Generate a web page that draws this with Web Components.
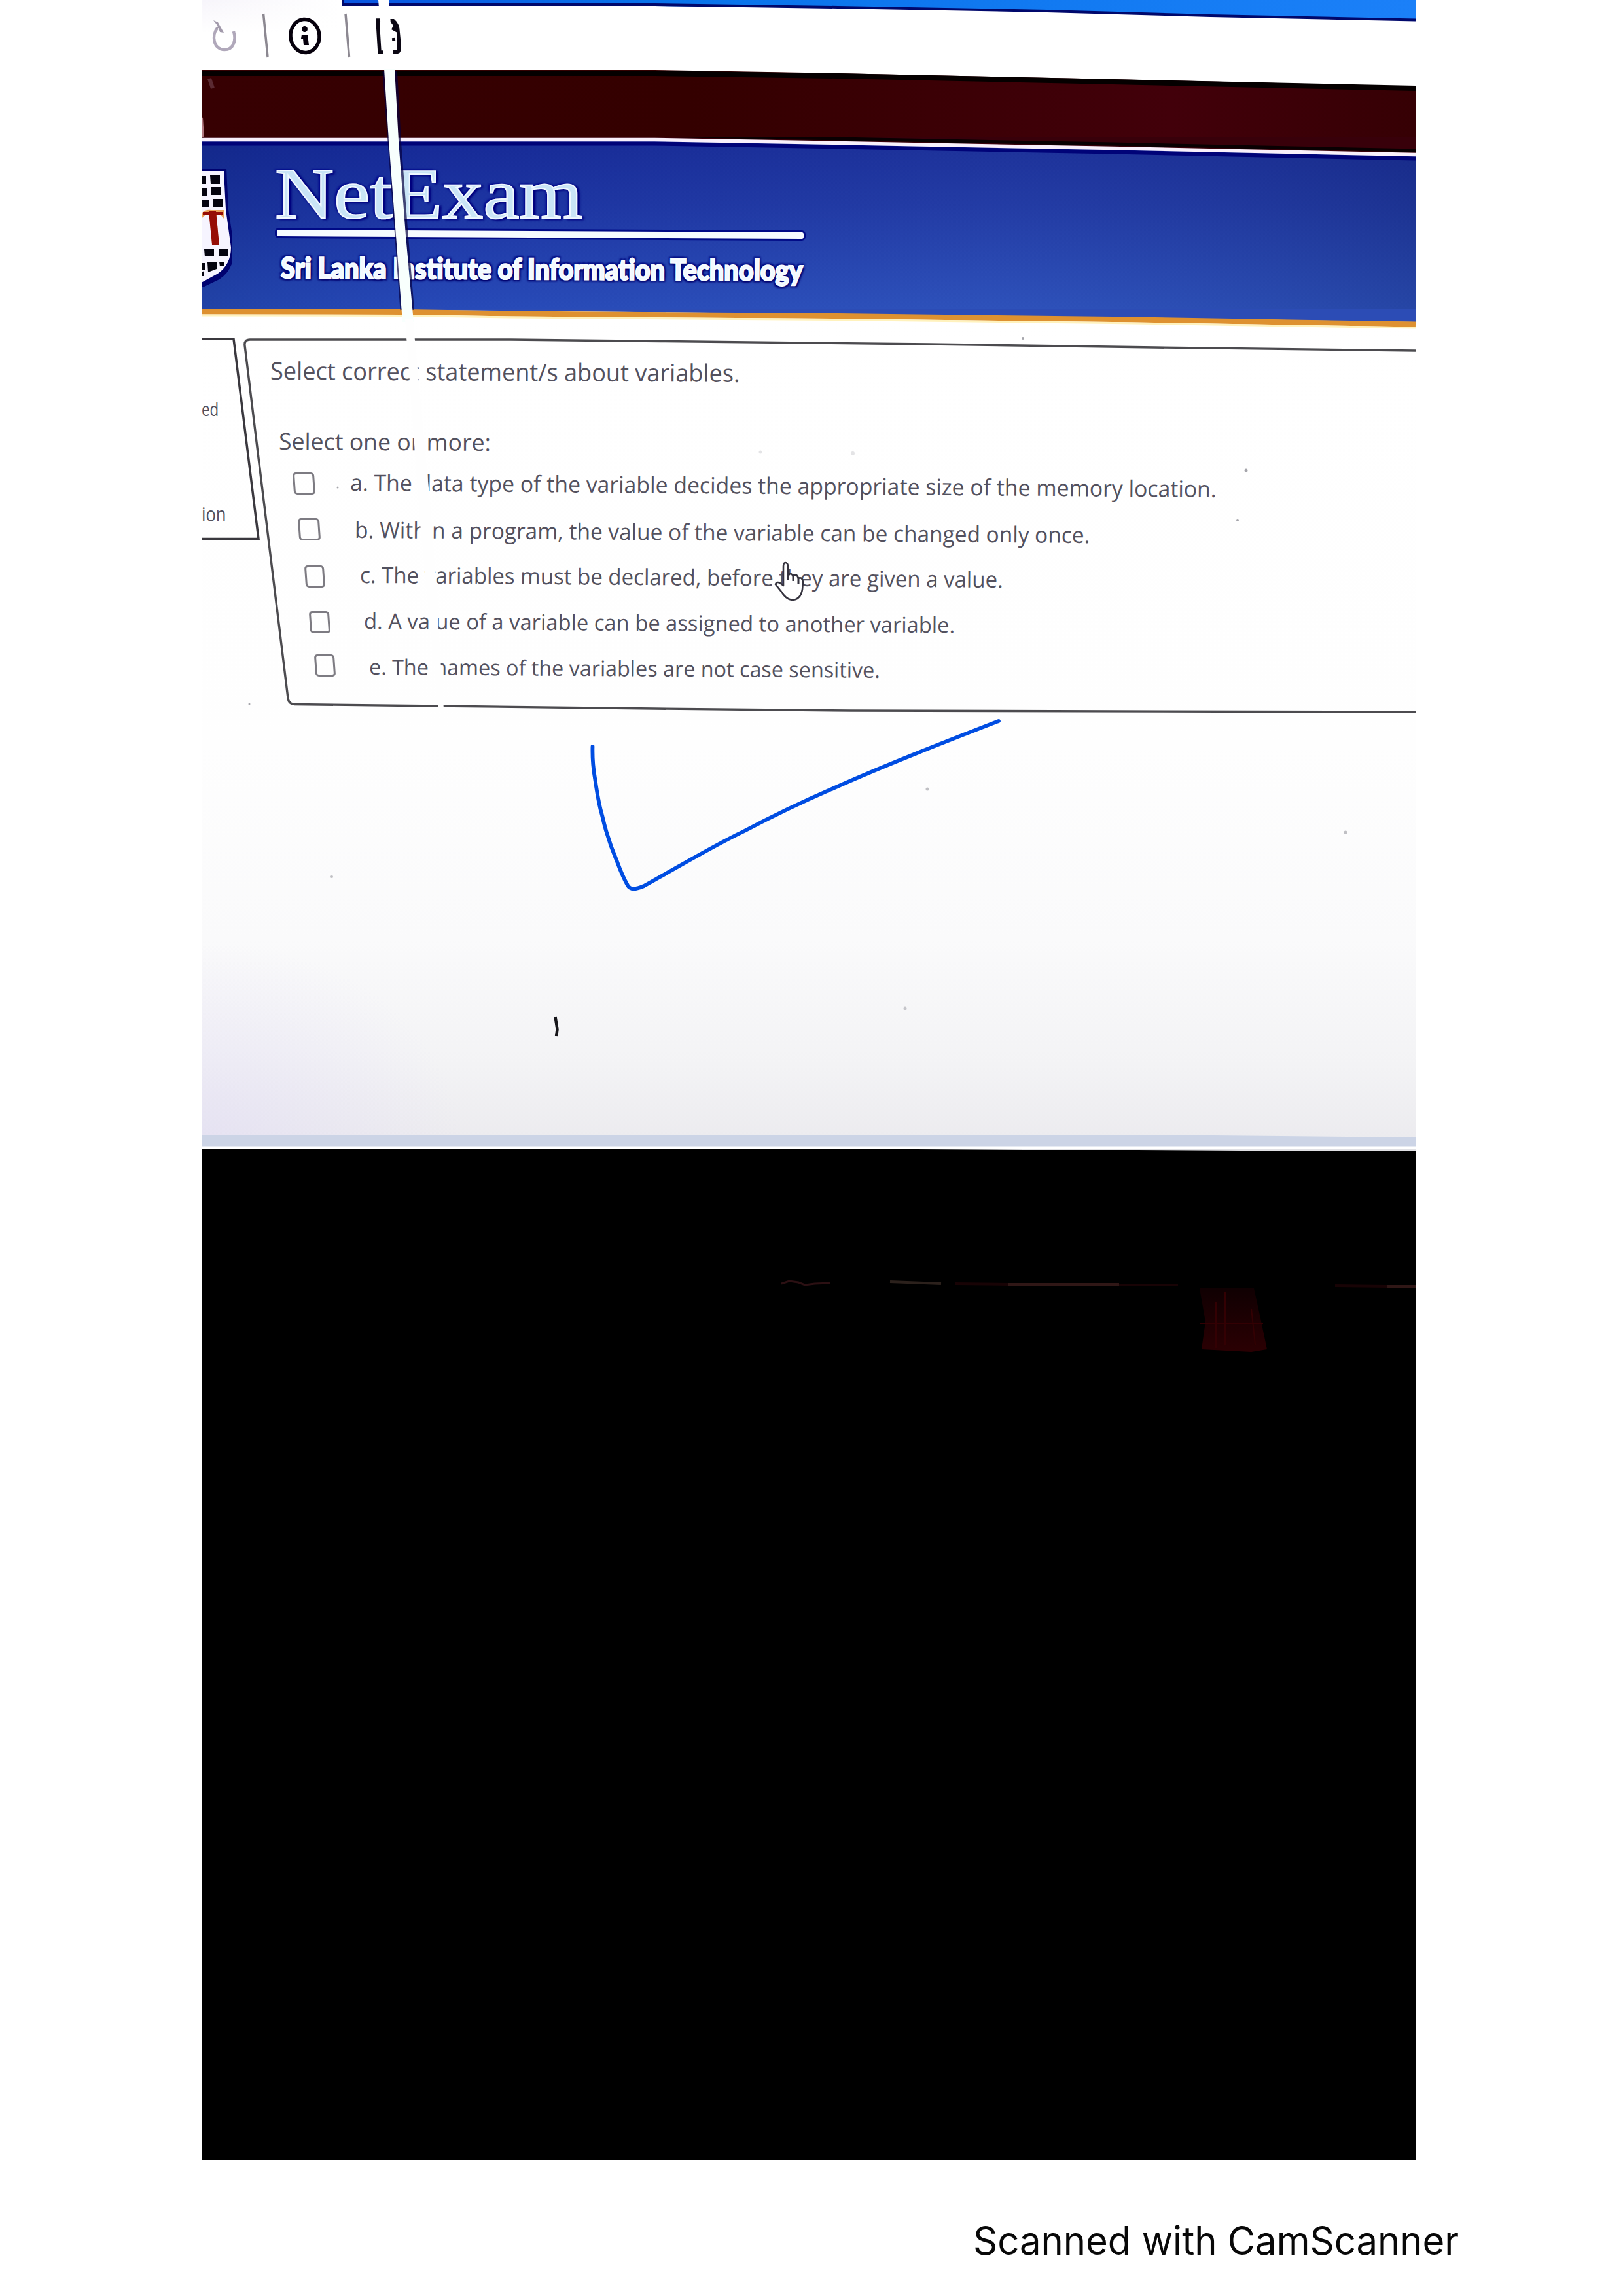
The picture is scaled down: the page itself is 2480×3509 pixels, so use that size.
<!DOCTYPE html>
<html lang="en">
<head>
<meta charset="utf-8">
<title>NetExam</title>
<style>
html,body{margin:0;background:#fff}
body{width:2480px;height:3509px;overflow:hidden;font-family:"Open Sans","Noto Sans",sans-serif}
</style>
</head>
<body>
<scan-page>
  <scan-photo>
    <browser-bar></browser-bar>
    <maroon-band></maroon-band>
    <exam-banner>
      <fit-text slot="title" w="470" size="110" rot="0.05" style="font-family:'Liberation Serif',serif">NetExam</fit-text>
      <fit-text slot="sub" w="798" size="44" rot="0.28" style="font-family:Lato,sans-serif;font-weight:900">Sri Lanka Institute of Information Technology</fit-text>
    </exam-banner>
    <quiz-area>
      <fit-text slot="side" w="26" size="30" style="margin-top:138px;margin-left:0">ed</fit-text>
      <fit-text slot="side" w="38" size="31" style="margin-top:130px;margin-left:0">ion</fit-text>
      <fit-text w="717" size="37" rot="0.3" style="margin:75px 0 0 33px">Select correct statement/s about variables.</fit-text>
      <fit-text w="324" size="35" rot="0.35" style="margin:72px 0 27px 46px">Select one or more:</fit-text>
      <answer-option style="height:73px;padding-left:76px;--gap:54px;--up:2px"><fit-text w="1324" size="34.5" rot="0.43">a. The data type of the variable decides the appropriate size of the memory location.</fit-text></answer-option>
      <answer-option style="height:69px;padding-left:84px;--gap:53px;--dy:1px;--up:1px"><fit-text w="1123" size="34" rot="0.41">b. Within a program, the value of the variable can be changed only once.</fit-text></answer-option>
      <answer-option style="height:70px;padding-left:94px;--gap:54px;--dy:4px;--w:30px;--up:1px"><fit-text w="983" size="34" rot="0.41">c. The variables must be declared, before they are given a value.</fit-text></answer-option>
      <answer-option style="height:71px;padding-left:101px;--gap:52px;--dy:4px;--w:31px;--up:2px"><fit-text w="903" size="33" rot="0.4">d. A value of a variable can be assigned to another variable.</fit-text></answer-option>
      <answer-option style="height:70px;padding-left:109px;--gap:52px;--dy:-1px;--w:31px;--up:2px"><fit-text w="781" size="32.5" rot="0.36">e. The names of the variables are not case sensitive.</fit-text></answer-option>
    </quiz-area>
    <dark-desk></dark-desk>
    <ink-layer slot="over"></ink-layer>
  </scan-photo>
  <fit-text slot="foot" w="742" size="60.5" style="font-family:Inter,sans-serif;color:#080808">Scanned with CamScanner</fit-text>
</scan-page>
<script>
const define = (name, html, extra) => customElements.define(name, class extends HTMLElement {
  connectedCallback() {
    if (!this.shadowRoot) this.attachShadow({mode: 'open'}).innerHTML = html;
    if (extra) extra(this, this.shadowRoot);
  }
});

// One line of text, stretched to width w and turned by rot degrees about its baseline start.
define('fit-text', `<style>
:host{display:block;white-space:nowrap}
span{display:inline-block;transform-origin:0 88%}
</style><span><slot></slot></span>`, (el, root) => {
  const s = root.querySelector('span'), size = +el.getAttribute('size');
  el.style.fontSize = el.style.lineHeight = el.style.height = size + 'px';
  const fit = () => {
    const w = s.offsetWidth;
    if (w) s.style.transform = `rotate(${el.getAttribute('rot') || 0}deg) scaleX(${+el.getAttribute('w') / w})`;
  };
  fit();
  addEventListener('DOMContentLoaded', fit);
  addEventListener('load', fit);
});

define('scan-page', `<style>
:host{display:flex;flex-direction:column;width:2480px;height:3509px;background:#fff}
footer{padding:93px 0 0 1487px}
</style><slot></slot><footer><slot name="foot"></slot></footer>`);

define('scan-photo', `<style>
:host{display:flex;flex-direction:column;position:relative;width:1855px;height:3301px;margin-left:308px;overflow:hidden;background:#fff}
</style><slot></slot><slot name="over"></slot>`);

define('browser-bar', `<style>
:host{display:block;height:107px}svg{display:block}
</style><svg width="1855" height="107" viewBox="308 0 1855 107" fill="none">
<defs><linearGradient id="t"><stop offset="0" stop-color="#0a55e0"/><stop offset=".3" stop-color="#0873ea"/><stop offset="1" stop-color="#1b80f8"/></linearGradient>
<linearGradient id="f"><stop offset="0" stop-color="#f7f5fb"/><stop offset="1" stop-color="#fff"/></linearGradient>
<linearGradient id="g" x2="0" y2="1"><stop offset="0" stop-color="#fff" stop-opacity="0"/><stop offset="1" stop-color="#fff"/></linearGradient></defs>
<path d="M308 0H520V50H308Z" fill="url(#f)"/>
<path d="M308 0H520V50H308Z" fill="url(#g)"/>
<path d="M522 0H2163V31L1750 20L1280 12L1000 9H522Z" fill="url(#t)"/>
<path d="M524 0V7H1000L1280 11L1600 17L1850 24L2163 30.500" stroke="#00086c" stroke-width="4"/>
<path d="M332 43C323 54 326 76 343 76C357 76 361 62 357 48" stroke="#b0a8ba" stroke-width="4.500"/>
<path d="M326 31L333 34L342 50L336 49L334 43L328 46L333 40Z" fill="#a29aab"/>
<path d="M402.500 21L409 87M528 21L533.500 87" stroke="#8c8891" stroke-width="3.500"/>
<ellipse cx="466" cy="55" rx="22" ry="25.500" stroke="#06000c" stroke-width="5.500" transform="rotate(-5 466 55)"/>
<circle cx="465.500" cy="44.500" r="4.500" fill="#06000c"/>
<path d="M461 53H470L472 69H464L463 59H460Z" fill="#06000c"/>
<path d="M583 31H577L580 80H587" stroke="#0b0713" stroke-width="5.500"/>
<path d="M593 29H602Q611 36 611 50L613 70Q613 82 608 82H598L599 77L606 76L607 50L598 45L601 39Z" fill="#0b0713"/>
<path d="M594 61L604 60" stroke="#0b0713" stroke-width="4.500"/>
</svg>`);

define('maroon-band', `<style>
:host{display:block;height:102px;background:#fff}svg{display:block}
</style><svg width="1855" height="102" viewBox="308 107 1855 102">
<defs><linearGradient id="m"><stop offset="0" stop-color="#370002"/><stop offset=".4" stop-color="#340000"/><stop offset=".8" stop-color="#42000a"/><stop offset="1" stop-color="#360004"/></linearGradient></defs>
<path d="M308 107H1000L1280 112L1700 121L2163 132V209H308Z" fill="url(#m)"/>
<path d="M308 112H1000L1280 116L1700 125L2163 135" fill="none" stroke="#050000" stroke-width="8"/>
<path d="M320 120L325 135" stroke="#5a2a32" stroke-width="6"/>
<path d="M308 180L310 209" stroke="#b07880" stroke-width="4"/>
</svg>`);

define('exam-banner', `<style>
:host{display:block;height:263px;position:relative;background:#38000a;color:#f0f9ff}
.bg{position:absolute;inset:0}
.row{position:relative;display:flex;gap:62px;padding-top:47px}
.col{display:flex;flex-direction:column}
.rule{width:805px;height:10px;margin:2px 0 0 7px;border-radius:3px;background:#f5fbff;box-shadow:0 0 0 3px #000a86;transform:rotate(.28deg)}
.t{margin:-15px 0 0 4px;height:110px;-webkit-text-stroke:2px #f0f8ff;color:#c9e4f6;text-shadow:3px 3px 3px #00007e,-3px -2px 3px #00078c,4px 0 3px #00007e}
.s{margin:23px 0 0 13px;-webkit-text-stroke:2.4px #f8fcff;text-shadow:3px 3px 3px #00006e,-3px -3px 3px #000a80,-3px 3px 3px #00006e,3px -3px 3px #000a80}
</style>
<svg class="bg" width="1855" height="263" viewBox="308 209 1855 263">
<defs><linearGradient id="b" x2="0" y2="1"><stop offset="0" stop-color="#192c93"/><stop offset=".4" stop-color="#2038a0"/><stop offset="1" stop-color="#2c50b8"/></linearGradient>
<linearGradient id="e"><stop offset="0" stop-color="#001a70" stop-opacity=".25"/><stop offset=".2" stop-color="#0018b0" stop-opacity=".12"/><stop offset=".65" stop-color="#4060d0" stop-opacity=".1"/><stop offset="1" stop-color="#102060" stop-opacity=".22"/></linearGradient></defs>
<path d="M308 213H1000L1280 218L1700 226L2163 237V472H308Z" fill="url(#b)"/>
<path d="M308 213H1000L1280 218L1700 226L2163 237V472H308Z" fill="url(#e)"/>
<path d="M308 207H1000L1280 212L1700 220L2163 230" fill="none" stroke="#090002" stroke-width="5"/>
<path d="M308 219.500H1000L1280 224.500L1700 232.500L2163 242.500" fill="none" stroke="#000378" stroke-width="6"/>
<path d="M308 213.500H1000L1280 218.500L1700 226.500L2163 236.500" fill="none" stroke="#f8effb" stroke-width="5.500"/>
</svg>
<div class="row">
<svg width="46" height="182" viewBox="308 256 46 182">
<path d="M300 258H346L349 320L358 380Q358 412 335 427L300 444Z" fill="#000270"/>
<path d="M300 261H342L345 320L353 378Q353 404 333 418L300 436Z" fill="#f6f4ff"/>
<path d="M308 269H315V281H308ZM321 268H336V281H322ZM308 287H317V299H308ZM322 286H337V298H323ZM308 305H319V316H308ZM325 304H340V316H326ZM312 381H327V392H313ZM334 381H348V392H335ZM308 402H314V412H308ZM317 401H331V411L318 416ZM335 400H343V407H336ZM308 416L312 414V422H308Z" fill="#04030f"/>
<path d="M308 326Q313 320 323 321H342V334Q338 327 331 328L334 372H324L320 328Q312 328 309 333Z" fill="#e9a25b"/>
<path d="M319 323H330L335 374H324ZM310 324H340V328H310Z" fill="#960d06"/>
</svg>
<div class="col"><div class="t"><slot name="title"></slot></div><div class="rule"></div><div class="s"><slot name="sub"></slot></div></div>
</div>`);

define('quiz-area', `<style>
:host{display:block;height:1284px;position:relative;background:#2c4cb5;color:#53515e}
.bg{position:absolute;inset:0}
.row{position:relative;display:flex}
aside{width:65px;display:flex;flex-direction:column;flex:none}
main{display:flex;flex-direction:column;width:1780px;padding-left:7px}
</style>
<svg class="bg" width="1855" height="1284" viewBox="308 472 1855 1284" fill="none">
<defs><linearGradient id="p" x2="0" y2="1"><stop offset="0" stop-color="#fff"/><stop offset=".52" stop-color="#fefefe"/><stop offset=".75" stop-color="#fafafb"/><stop offset=".9" stop-color="#f3f3f5"/><stop offset="1" stop-color="#ebeaee"/></linearGradient>
<radialGradient id="l" cx="0" cy="1" r="1"><stop offset="0" stop-color="#dfd9f5" stop-opacity=".5"/><stop offset="1" stop-color="#dfd9f5" stop-opacity="0"/></radialGradient></defs>
<path d="M308 472L780 475L1280 480L1700 485L2163 492V1756H308Z" fill="url(#p)"/>
<path d="M308 1440H700V1735H308Z" fill="url(#l)"/>
<path d="M308 476.500L620 477L780 479.500L1280 483L1700 488L2163 495.500" stroke="#de9130" stroke-width="8"/>
<path d="M308 482L620 482.500L780 485L1280 488.500L1700 493.500L2163 501" stroke="#fff2bd" stroke-width="3"/>
<path d="M308 518H357L395 823.500H308" stroke="#3a383e" stroke-width="3.500"/>
<path d="M2163 536L1765 531L1420 526L1010 521.500L780 519H382Q373 519 374 528L395 700L440 1067Q441 1076 450 1076.500L668 1079L1000 1083L1300 1086L2163 1088" stroke="#4c4b4f" stroke-width="3.400"/>
<path d="M308 1734H1750L2163 1738V1756H308Z" fill="#ccd4e6"/>
<path d="M308 1754.500H2163" stroke="#fff" stroke-width="4"/>
<path d="M848.500 1554L851.500 1573L850 1584" stroke="#17161a" stroke-width="4.500"/>
<g fill="#a5a5ab"><circle cx="1904" cy="719" r="2.500"/><circle cx="1891" cy="795" r="2"/><circle cx="1563" cy="517" r="2"/><circle cx="1162" cy="691" r="2.500" opacity=".3"/><circle cx="1303" cy="693" r="3" opacity=".3"/><circle cx="1417" cy="1206" r="2.500" opacity=".7"/><circle cx="507" cy="1340" r="2" opacity=".7"/><circle cx="2056" cy="1272" r="2.500" opacity=".7"/><circle cx="516" cy="745" r="1.500"/><circle cx="381" cy="1076" r="1.500"/><circle cx="1383" cy="1541" r="2.500" opacity=".6"/></g>
</svg>
<div class="row"><aside><slot name="side"></slot></aside><main><slot></slot></main></div>`);

define('answer-option', `<style>
:host{display:flex;align-items:flex-start;box-sizing:border-box;flex:none}
i{box-sizing:border-box;flex:none;width:var(--w,33px);height:34px;margin:var(--dy,4px) var(--gap) 0 -8px;border:3px solid #7d7b82;border-radius:5px;transform:skewX(4deg)}
div{padding-top:var(--up,0)}
</style><i></i><div><slot></slot></div>`);

define('dark-desk', `<style>
:host{display:block;height:1545px;background:#000}svg{display:block}
</style><svg width="1855" height="400" viewBox="308 1756 1855 400" fill="none">
<defs><linearGradient id="r" x2="0" y2="1"><stop offset="0" stop-color="#100002"/><stop offset="1" stop-color="#2b0003"/></linearGradient></defs>
<path d="M1400 1756H2163V1759H1900Z" fill="#e0e0e4"/>
<path d="M1194 1962L1206 1958L1220 1960L1230 1964L1245 1962L1268 1961" stroke="#2c1013" stroke-width="3"/>
<path d="M1360 1959L1438 1962" stroke="#2c211c" stroke-width="4"/>
<path d="M1460 1962L1540 1963M1710 1964H1800M2040 1965L2120 1966" stroke="#180305" stroke-width="4"/>
<path d="M1540 1963H1710M2120 1966H2163" stroke="#301716" stroke-width="4"/>
<path d="M1833 1969H1916L1925 2010L1936 2062L1912 2066L1836 2062L1842 2020Z" fill="url(#r)"/>
<path d="M1834 2023H1930M1858 1990V2060M1872 1975V2055M1912 2000L1918 2055" stroke="#330003" stroke-width="2"/>
</svg>`);

// Things that lie over the photographed screen: light streak, pointer and pen tick.
define('ink-layer', `<style>
:host{position:absolute;inset:0}svg{display:block}
</style><svg width="1855" height="3301" viewBox="308 0 1855 3301" fill="none">
<path d="M578 0H594L603 107H588Z" fill="#fff"/>
<path d="M587 109L595 217L605 350L614 474" stroke="#05003e" stroke-width="5" opacity=".7"/>
<path d="M604 109L610 217L620 350L630 474" stroke="#05003e" stroke-width="6" opacity=".7"/>
<path d="M587 105H603L609 215L620 360L632 492H615L605 360L594 215Z" fill="#f8fffd"/>
<path d="M619 488H631L660 800L678 1084H670L642 800Z" fill="#fefefe"/>
<path d="M1197 890V866Q1197 860 1200 860Q1204 860 1204 866V881Q1208 873 1212 881Q1217 875 1220 884Q1226 881 1227 890L1226 901Q1223 917 1210 917Q1201 916 1193 903L1185 893Q1187 886 1197 895Z" fill="#fff" stroke="#35333e" stroke-width="2.600" stroke-linejoin="round"/>
<path d="M1204 866V886M1212 878V888M1220 882V892" stroke="#35333e" stroke-width="3"/>
<path d="M905.500 1141C905 1160 906 1172 909 1189C912 1208 914 1226 920 1246C925 1268 934 1296 943 1317C950 1336 955 1346 959 1353C963 1361 975 1358 984 1354Q995 1348 1007 1341C1050 1317 1092 1292 1135.500 1271C1181 1247 1227 1225 1273 1205C1356 1168 1441 1135 1526 1102" stroke="#004de2" stroke-width="5.800" stroke-linecap="round" stroke-linejoin="round"/>
</svg>`);
</script>
</body>
</html>
